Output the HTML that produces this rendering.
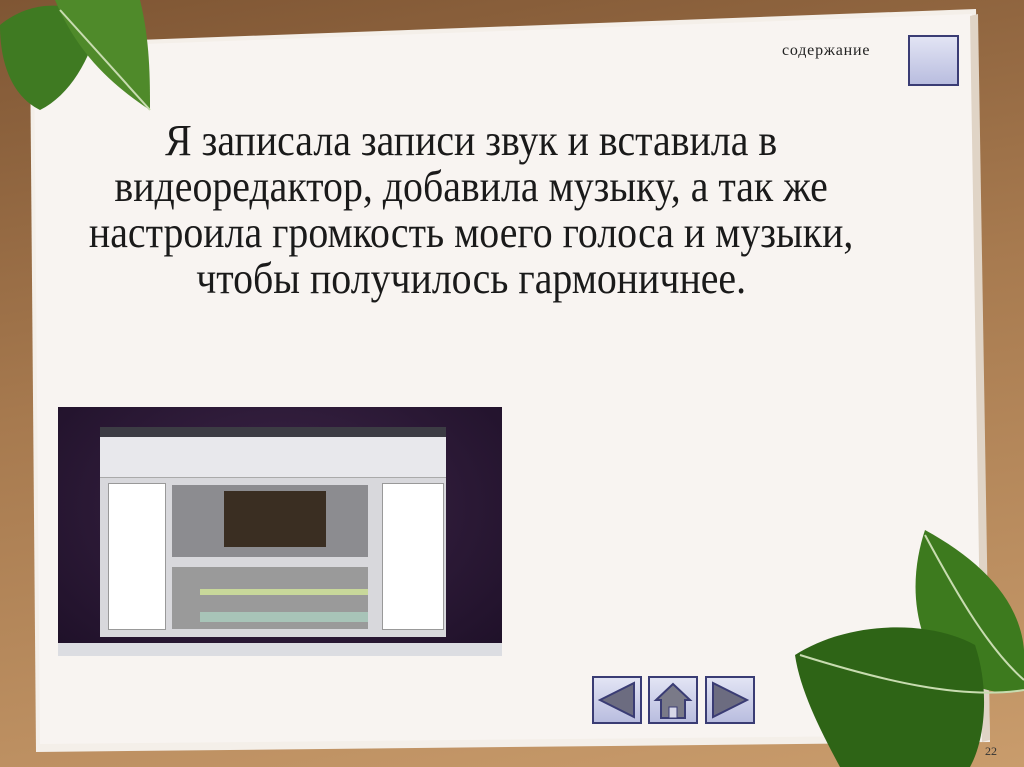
<!DOCTYPE html>
<html><head><meta charset="utf-8"><style>
*{margin:0;padding:0}
body{width:1024px;height:767px;overflow:hidden;position:relative;background:linear-gradient(170deg,#7f5634 0%,#a77a4f 45%,#c99c6c 100%);font-family:"Liberation Serif",serif}
.abs{position:absolute}
.txt{left:10px;width:920px;top:118px;text-align:center;font-size:44px;line-height:46px;color:#1a1a1a;transform:scaleX(0.905);transform-origin:472px 0}
.btn{position:absolute;width:46px;height:44px;border:2px solid #3a3c74;background:linear-gradient(#e2e4f4,#b9bddf)}
</style></head><body>
<svg class="abs" style="left:0;top:0" width="1024" height="767">
<polygon points="30,44 976,9 990,742 36,752" fill="#f4efe9"/>
<polygon points="34,48 972,14 984,735 40,744" fill="#f8f4f1"/>
<polygon points="970,16 978,14 990,740 982,742" fill="#e0d4c6"/>
</svg>
<div class="abs" style="left:782px;top:42px;font-size:16px;letter-spacing:0.8px;color:#222">содержание</div>
<div class="btn" style="left:908px;top:35px;width:47px;height:47px"></div>
<div class="abs txt">Я записала записи звук и вставила в<br>видеоредактор, добавила музыку, а так же<br>настроила громкость моего голоса и музыки,<br>чтобы получилось гармоничнее.</div>
<div class="abs" style="left:58px;top:407px;width:444px;height:249px;background:radial-gradient(ellipse at 50% 40%,#3d2548,#1e1028)">
 <div class="abs" style="left:42px;top:20px;width:346px;height:210px;background:#d8d8dc">
  <div class="abs" style="left:0;top:0;width:346px;height:10px;background:#3c3c44"></div>
  <div class="abs" style="left:0;top:10px;width:346px;height:40px;background:#e8e8ec;border-bottom:1px solid #aaa"></div>
  <div class="abs" style="left:8px;top:56px;width:56px;height:145px;background:#fff;border:1px solid #999"></div>
  <div class="abs" style="left:72px;top:58px;width:196px;height:72px;background:#8c8c90"></div>
  <div class="abs" style="left:124px;top:64px;width:102px;height:56px;background:#3a2e22"></div>
  <div class="abs" style="left:72px;top:140px;width:196px;height:62px;background:#9a9a9a"></div>
  <div class="abs" style="left:100px;top:162px;width:168px;height:6px;background:#c8d89a"></div>
  <div class="abs" style="left:100px;top:185px;width:168px;height:10px;background:#a8c4b8"></div>
  <div class="abs" style="left:282px;top:56px;width:60px;height:145px;background:#fff;border:1px solid #999"></div>
 </div>
 <div class="abs" style="left:0;top:236px;width:444px;height:13px;background:#dcdde2"></div>
</div>
<div class="btn" style="left:592px;top:676px"><svg width="46" height="44"><polygon points="6,22 40,5 40,39" fill="#6c6c80" stroke="#3a3c74" stroke-width="2"/></svg></div>
<div class="btn" style="left:648px;top:676px"><svg width="46" height="44"><polygon points="23,6 6,22 11,22 11,40 35,40 35,22 40,22" fill="#7a7a88" stroke="#3a3c74" stroke-width="2"/><rect x="19" y="29" width="8" height="11" fill="#d8d8e8" stroke="#3a3c74"/></svg></div>
<div class="btn" style="left:705px;top:676px"><svg width="46" height="44"><polygon points="40,22 6,5 6,39" fill="#6c6c80" stroke="#3a3c74" stroke-width="2"/></svg></div>
<div class="abs" style="left:985px;top:744px;font-size:12px;color:#333">22</div>
<svg class="abs" style="left:0;top:0" width="1024" height="767">
<path d="M0,25 C30,0 70,0 100,20 C90,60 70,95 40,110 C10,95 0,60 0,25Z" fill="#3f7a22"/>
<path d="M55,0 L140,0 C150,40 150,80 150,110 C120,90 80,60 55,0Z" fill="#4f8a2a"/>
<path d="M60,10 L150,110" stroke="#c8dcb0" stroke-width="2"/>
<path d="M925,530 C980,560 1020,600 1024,650 L1024,690 C990,700 950,680 925,640 C910,600 915,560 925,530Z" fill="#3d7a1e"/>
<path d="M795,655 C850,620 930,620 975,645 C990,690 985,740 970,767 L840,767 C820,730 800,690 795,655Z" fill="#2e6416"/>
<path d="M800,655 C880,680 960,700 1024,690" stroke="#c8dcb0" stroke-width="2" fill="none"/>
<path d="M925,535 C960,600 990,650 1024,680" stroke="#c8dcb0" stroke-width="2" fill="none"/>
</svg>
</body></html>
